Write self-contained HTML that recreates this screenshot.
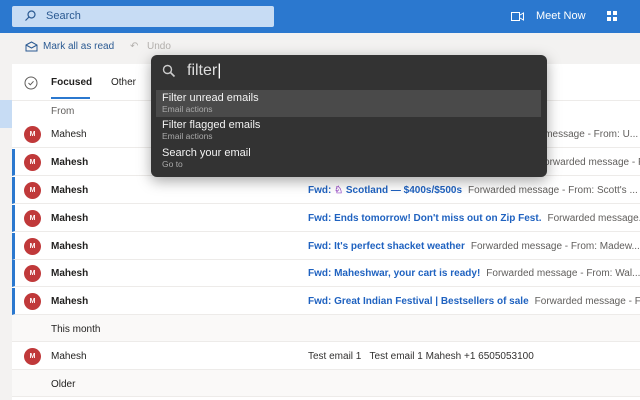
<!DOCTYPE html>
<html><head><style>
*{margin:0;padding:0;box-sizing:border-box}
body{width:640px;height:400px;overflow:hidden;background:#f3f2f1;font-family:"Liberation Sans",sans-serif;position:relative}
.top{position:absolute;left:0;top:0;width:640px;height:33px;background:#2b78cf}
.search{position:absolute;left:12px;top:6px;width:262px;height:21px;background:#c7dcf4;border-radius:2px;font-size:11px;color:#2b5a92}
.abs{position:absolute}
.list{position:absolute;left:12px;top:64px;width:628px;height:336px;background:#fff}
.row{position:absolute;left:12px;width:628px;height:27px;background:#fff;border-bottom:1px solid #edebe9;font-size:10px;overflow:hidden}
.row.u{border-left:3px solid #2b78cf}
.av{position:absolute;left:12px;top:5px;width:17px;height:17px;border-radius:50%;background:#c0393a;color:#fff;font-size:7px;text-align:center;line-height:17px;font-weight:bold}
.row.u .av{left:9px}
.nm{position:absolute;left:39px;top:8px;color:#201f1e}
.row.u .nm{left:36px;font-weight:bold}
.sb{position:absolute;left:296px;top:8px;white-space:nowrap;color:#605e5c}
.row.u .sb{left:293px}
.sb b{color:#1f62c0;font-weight:bold;margin-right:6px}
.sec{position:absolute;left:12px;width:628px;height:27px;background:#faf9f8;font-size:10px;color:#201f1e;border-bottom:1px solid #edebe9}
.ov{position:absolute;left:151px;top:55px;width:396px;height:122px;background:#333;border-radius:6px;box-shadow:0 4px 14px rgba(0,0,0,.35);color:#fff}
.it{position:absolute;left:5px;width:385px;height:27px;padding-left:6px}
.it .t{font-size:11px;margin-top:2px;color:#f3f3f3}
.it .s{font-size:8.5px;color:#aaa}
</style></head><body>
<div class="top"></div>
<div class="search"><svg class="abs" style="left:12px;top:4px" width="12" height="12" viewBox="0 0 12 12"><circle cx="7.5" cy="4.5" r="3.5" fill="none" stroke="#2b5a92" stroke-width="1.2"/><path d="M5 7L1.5 10.5" stroke="#2b5a92" stroke-width="1.2"/></svg><span class="abs" style="left:34px;top:4px">Search</span></div>
<svg class="abs" style="left:511px;top:12px" width="13" height="9" viewBox="0 0 13 9"><rect x=".5" y=".5" width="8" height="8" fill="none" stroke="#fff"/><path d="M9 3L12.5 1V8L9 6" fill="none" stroke="#fff"/></svg>
<span class="abs" style="left:536px;top:10px;color:#fff;font-size:11px">Meet Now</span>
<svg class="abs" style="left:607px;top:11px" width="11" height="11" viewBox="0 0 11 11" fill="#fff"><rect width="4" height="4"/><rect x="6" width="4" height="4"/><rect y="6" width="4" height="4"/><rect x="6" y="6" width="4" height="4"/></svg>
<svg class="abs" style="left:25px;top:41px" width="13" height="11" viewBox="0 0 13 11"><path d="M1 4L6.5 1 12 4V10H1Z M1 4L6.5 7 12 4" fill="none" stroke="#2b5a92"/></svg>
<span class="abs" style="left:43px;top:41px;font-size:10px;color:#2b5a92">Mark all as read</span>
<span class="abs" style="left:130px;top:41px;font-size:10px;color:#b3b0ad">↶</span>
<span class="abs" style="left:147px;top:41px;font-size:10px;color:#b3b0ad">Undo</span>
<div class="abs" style="left:0;top:100px;width:12px;height:28px;background:#c7dcf4"></div>
<div class="list"></div>
<svg class="abs" style="left:24px;top:76px" width="14" height="14" viewBox="0 0 14 14"><circle cx="7" cy="7" r="6" fill="none" stroke="#605e5c"/><path d="M4.5 7L6.3 8.8 9.5 5.3" fill="none" stroke="#605e5c"/></svg>
<span class="abs" style="left:51px;top:77px;font-size:10px;color:#201f1e;font-weight:bold">Focused</span>
<div class="abs" style="left:51px;top:97px;width:39px;height:2px;background:#2b78cf"></div>
<span class="abs" style="left:111px;top:77px;font-size:10px;color:#201f1e">Other</span>
<div class="abs" style="left:12px;top:100px;width:628px;height:1px;background:#edebe9"></div>
<span class="abs" style="left:51px;top:106px;font-size:10px;color:#605e5c">From</span>
<span class="abs" style="left:308px;top:106px;font-size:10px;color:#605e5c">Subject</span>
<div class="row" style="top:121px"><div class="av">M</div><div class="nm">Mahesh</div><div class="sb">Fwd: Snag your favorite snacks on sale.&nbsp;&nbsp; Forwarded message - From: U...</div></div>
<div class="row u" style="top:149px"><div class="av">M</div><div class="nm">Mahesh</div><div class="sb"><b>Fwd: $20 off--time for savory fall comfort foods</b>Forwarded message - From: ...</div></div>
<div class="row u" style="top:177px"><div class="av">M</div><div class="nm">Mahesh</div><div class="sb"><b>Fwd: <span style="color:#9b4fc9">♘</span> Scotland — $400s/$500s</b>Forwarded message - From: Scott's ...</div></div>
<div class="row u" style="top:205px"><div class="av">M</div><div class="nm">Mahesh</div><div class="sb"><b>Fwd: Ends tomorrow! Don't miss out on Zip Fest.</b>Forwarded message...</div></div>
<div class="row u" style="top:233px"><div class="av">M</div><div class="nm">Mahesh</div><div class="sb"><b>Fwd: It's perfect shacket weather</b>Forwarded message - From: Madew...</div></div>
<div class="row u" style="top:260px"><div class="av">M</div><div class="nm">Mahesh</div><div class="sb"><b>Fwd: Maheshwar, your cart is ready!</b>Forwarded message - From: Wal...</div></div>
<div class="row u" style="top:288px"><div class="av">M</div><div class="nm">Mahesh</div><div class="sb"><b>Fwd: Great Indian Festival | Bestsellers of sale</b>Forwarded message - F...</div></div>
<div class="sec" style="top:315px"><span class="abs" style="left:39px;top:9px">This month</span></div>
<div class="row" style="top:343px"><div class="av">M</div><div class="nm">Mahesh</div><div class="sb" style="color:#323130">Test email 1&nbsp;&nbsp; Test email 1 Mahesh +1 6505053100</div></div>
<div class="sec" style="top:370px"><span class="abs" style="left:39px;top:9px">Older</span></div>
<div class="ov">
<svg class="abs" style="left:11px;top:9px" width="14" height="14" viewBox="0 0 14 14"><circle cx="5.5" cy="5.5" r="4" fill="none" stroke="#ccc" stroke-width="1.4"/><path d="M8.5 8.5L12.5 12.5" stroke="#ccc" stroke-width="1.6"/></svg>
<span class="abs" style="left:36px;top:7px;font-size:16px;color:#ddd">filter<span style="color:#fff;font-weight:normal">|</span></span>
<div class="it" style="top:35px;background:#4a4a4a"><div class="t">Filter unread emails</div><div class="s">Email actions</div></div>
<div class="it" style="top:62px"><div class="t">Filter flagged emails</div><div class="s">Email actions</div></div>
<div class="it" style="top:90px"><div class="t">Search your email</div><div class="s">Go to</div></div>
</div>
</body></html>
